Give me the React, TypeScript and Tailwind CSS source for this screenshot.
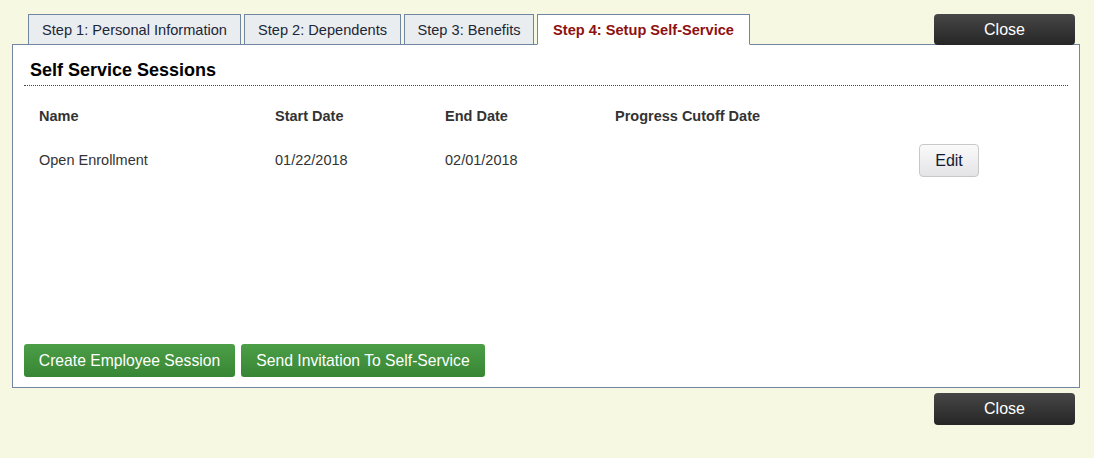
import React from "react";

const tabs = [
  { label: "Step 1: Personal Information", w: "w-[213px]" },
  { label: "Step 2: Dependents", w: "w-[157px]" },
  { label: "Step 3: Benefits", w: "w-[130px]" },
];

export default function App() {
  return (
    <div className="w-[1094px] h-[458px] bg-[#f6f8e2] font-['Liberation_Sans',Arial,sans-serif] pt-[14px] pl-[12px] overflow-hidden">
      <div className="w-[1068px]">
        <div className="flex items-start">
          <div className="flex gap-[3px] ml-[16px] relative z-10">
            {tabs.map((t) => (
              <div
                key={t.label}
                className={`${t.w} h-[31px] flex items-center justify-center bg-[#eaedf0] border border-[#7186a3] border-b-[#7186a3] text-[14.6px] text-[#1c2636] pt-[3px]`}
              >
                {t.label}
              </div>
            ))}
            <div className="w-[213px] h-[31px] flex items-center justify-center bg-white border border-[#7186a3] border-b-white text-[14.6px] font-bold text-[#8e1111] pt-[3px]">
              Step 4: Setup Self-Service
            </div>
          </div>
          <button className="ml-auto mr-[5px] w-[141px] h-[31px] rounded-[4px] bg-gradient-to-b from-[#474747] to-[#262626] text-white text-[16px]">
            Close
          </button>
        </div>
        <div className="-mt-px h-[344px] bg-white border border-[#7186a3] flex flex-col px-[11px] pb-[10px]">
          <div className="pt-[15px] pl-[6px] pb-[4px] text-[18px] font-bold text-black border-b border-dotted border-[#444] leading-[21px]">
            Self Service Sessions
          </div>
          <div className="flex text-[14.5px] font-bold text-[#333] mt-[20px] leading-[20px]">
            <div className="w-[236px] pl-[15px] box-content">Name</div>
            <div className="w-[170px]">Start Date</div>
            <div className="w-[170px]">End Date</div>
            <div>Progress Cutoff Date</div>
          </div>
          <div className="flex items-center text-[14.5px] text-[#333] mt-[18px]">
            <div className="w-[236px] pl-[15px] box-content">Open Enrollment</div>
            <div className="w-[170px]">01/22/2018</div>
            <div className="w-[170px]">02/01/2018</div>
            <div className="w-[304px]"></div>
            <button className="w-[60px] h-[33px] rounded-[4px] border border-[#c8c8c8] bg-gradient-to-b from-[#fafafa] to-[#e4e4e8] text-[16px] text-[#111a33]">
              Edit
            </button>
          </div>
          <div className="mt-auto flex gap-[6px]">
            <button className="w-[211px] h-[33px] rounded-[3px] bg-gradient-to-b from-[#4c9e47] to-[#378634] text-white text-[15.7px]">
              Create Employee Session
            </button>
            <button className="w-[244px] h-[33px] rounded-[3px] bg-gradient-to-b from-[#4c9e47] to-[#378634] text-white text-[15.7px]">
              Send Invitation To Self-Service
            </button>
          </div>
        </div>
        <div className="flex justify-end mt-[5px]">
          <button className="mr-[5px] w-[141px] h-[32px] rounded-[4px] bg-gradient-to-b from-[#474747] to-[#262626] text-white text-[16px]">
            Close
          </button>
        </div>
      </div>
    </div>
  );
}
